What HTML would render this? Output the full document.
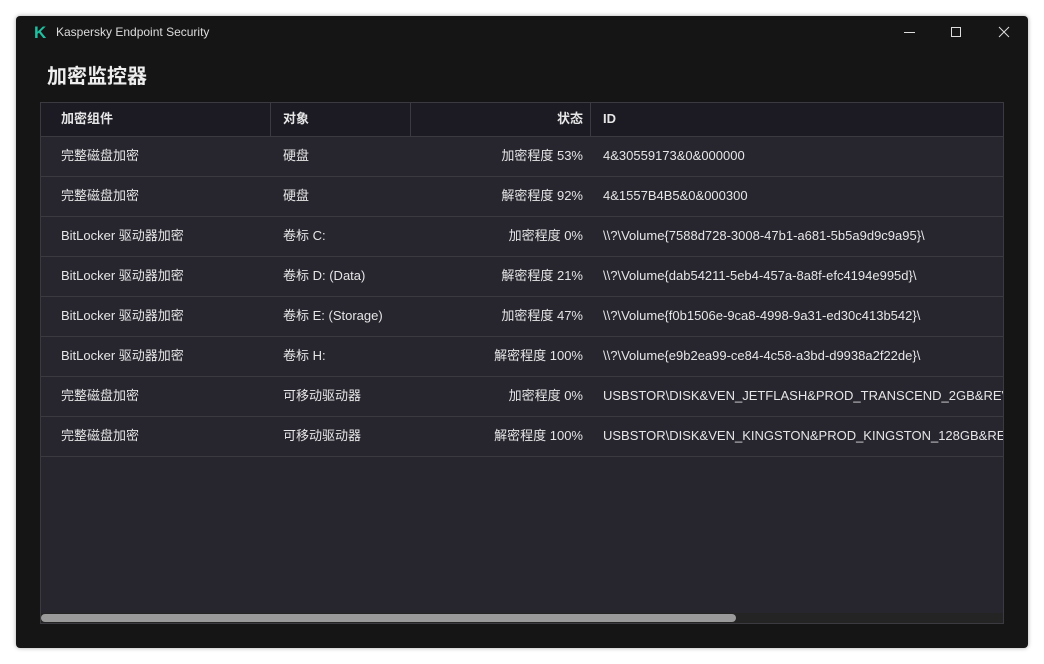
<!DOCTYPE html><html><head><meta charset="utf-8"><style>
*{margin:0;padding:0;box-sizing:border-box}
body{width:1044px;height:664px;background:#fff;position:relative;overflow:hidden;font-family:"Liberation Sans","Noto Sans CJK SC",sans-serif;color:#e6e6e6}
.win{position:absolute;left:16px;top:16px;width:1012px;height:632px;background:#151515;border-radius:4px;box-shadow:0 0 4px rgba(0,0,0,.35)}
.title{position:absolute;left:40px;top:9px;font-size:12px;color:#ddd}
.logo{position:absolute;left:18px;top:9px;font-size:17px;font-weight:bold;color:#1fbf9f;line-height:16px}
h1{position:absolute;left:31px;top:44px;font-size:20px;font-weight:bold;color:#eee}
.tbl{position:absolute;left:24px;top:86px;width:964px;height:522px;background:#27262f;border:1px solid #3a3a40;overflow:hidden}
.row{position:absolute;left:0;width:962px;height:40px;border-bottom:1px solid #3a3a40;font-size:13px;line-height:37px}
.hdr{top:0;height:34px;line-height:32px;background:#1c1b24;font-weight:bold}
.c{position:absolute;top:0;white-space:nowrap;overflow:hidden}
.c1{left:20px}.c2{left:242px}.c3{left:370px;width:172px;text-align:right}.c4{left:562px;width:400px}
.hdr .sep{position:absolute;top:0;width:1px;height:34px;background:#3a3a40}
.sb{position:absolute;left:0;bottom:0;width:962px;height:10px;background:#242424}
.th{position:absolute;left:0;top:1px;width:695px;height:8px;border-radius:4px;background:#9a9a9a}
</style></head><body><div class="win">
<div class="logo">K</div><div class="title">Kaspersky Endpoint Security</div>
<svg style="position:absolute;left:884px;top:10px" width="120" height="14" viewBox="0 0 120 14"><line x1="4" y1="6.5" x2="15" y2="6.5" stroke="#ddd"/><rect x="51.5" y="1.5" width="9" height="9" fill="none" stroke="#ddd"/><path d="M99 1L109 11M109 1L99 11" stroke="#ddd"/></svg>
<h1>加密监控器</h1>
<div class="tbl">
<div class="row hdr"><span class="c c1">加密组件</span><span class="sep" style="left:229px"></span><span class="c c2">对象</span><span class="sep" style="left:369px"></span><span class="c c3">状态</span><span class="sep" style="left:549px"></span><span class="c c4">ID</span></div>
<div class="row" style="top:34px"><span class="c c1">完整磁盘加密</span><span class="c c2">硬盘</span><span class="c c3">加密程度 53%</span><span class="c c4">4&amp;30559173&amp;0&amp;000000</span></div>
<div class="row" style="top:74px"><span class="c c1">完整磁盘加密</span><span class="c c2">硬盘</span><span class="c c3">解密程度 92%</span><span class="c c4">4&amp;1557B4B5&amp;0&amp;000300</span></div>
<div class="row" style="top:114px"><span class="c c1">BitLocker 驱动器加密</span><span class="c c2">卷标 C:</span><span class="c c3">加密程度 0%</span><span class="c c4">\\?\Volume{7588d728-3008-47b1-a681-5b5a9d9c9a95}\</span></div>
<div class="row" style="top:154px"><span class="c c1">BitLocker 驱动器加密</span><span class="c c2">卷标 D: (Data)</span><span class="c c3">解密程度 21%</span><span class="c c4">\\?\Volume{dab54211-5eb4-457a-8a8f-efc4194e995d}\</span></div>
<div class="row" style="top:194px"><span class="c c1">BitLocker 驱动器加密</span><span class="c c2">卷标 E: (Storage)</span><span class="c c3">加密程度 47%</span><span class="c c4">\\?\Volume{f0b1506e-9ca8-4998-9a31-ed30c413b542}\</span></div>
<div class="row" style="top:234px"><span class="c c1">BitLocker 驱动器加密</span><span class="c c2">卷标 H:</span><span class="c c3">解密程度 100%</span><span class="c c4">\\?\Volume{e9b2ea99-ce84-4c58-a3bd-d9938a2f22de}\</span></div>
<div class="row" style="top:274px"><span class="c c1">完整磁盘加密</span><span class="c c2">可移动驱动器</span><span class="c c3">加密程度 0%</span><span class="c c4">USBSTOR\DISK&amp;VEN_JETFLASH&amp;PROD_TRANSCEND_2GB&amp;REV_</span></div>
<div class="row" style="top:314px"><span class="c c1">完整磁盘加密</span><span class="c c2">可移动驱动器</span><span class="c c3">解密程度 100%</span><span class="c c4">USBSTOR\DISK&amp;VEN_KINGSTON&amp;PROD_KINGSTON_128GB&amp;REV</span></div>
<div class="sb"><div class="th"></div></div>
</div></div></body></html>
